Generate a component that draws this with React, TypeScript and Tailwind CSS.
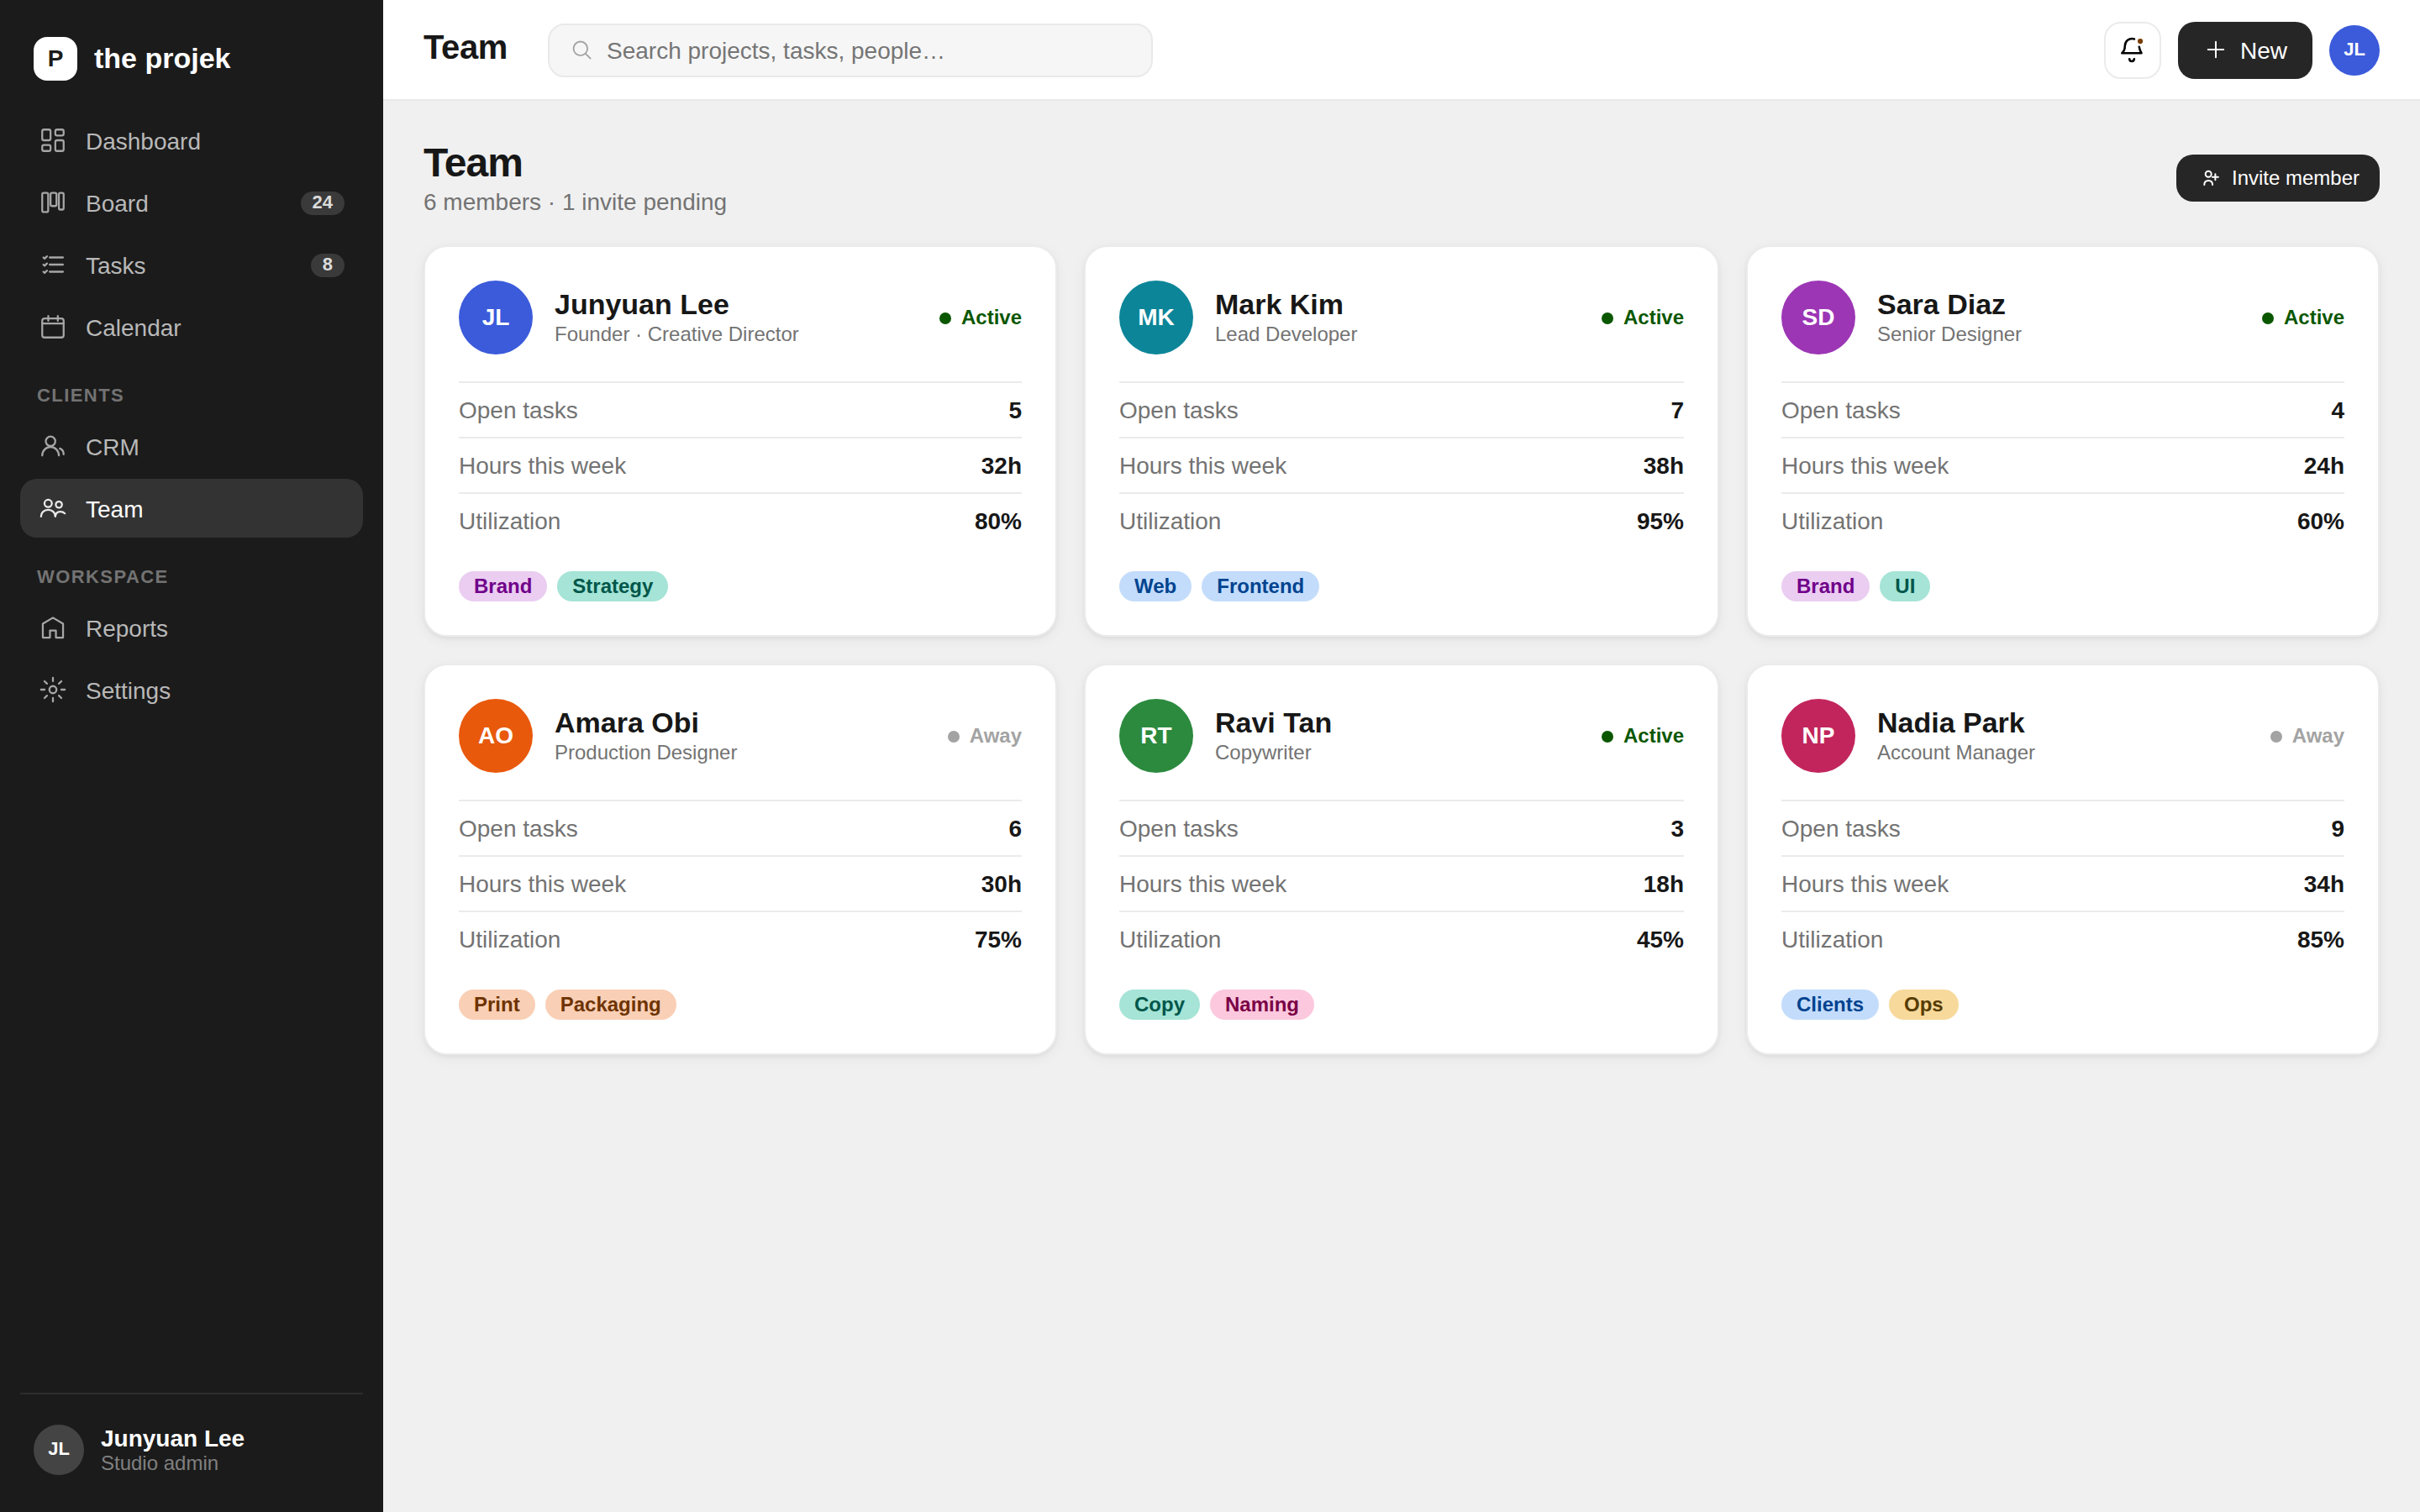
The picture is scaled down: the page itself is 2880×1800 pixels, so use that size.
import type { ReactNode } from "react";

type IconProps = { children: ReactNode; className?: string; strokeWidth?: number };

const Icon = ({ children, className = "", strokeWidth = 1.6 }: IconProps) => (
  <svg
    viewBox="0 0 24 24"
    fill="none"
    stroke="currentColor"
    strokeWidth={strokeWidth}
    strokeLinecap="round"
    strokeLinejoin="round"
    className={`shrink-0 ${className}`}
  >
    {children}
  </svg>
);

const icons = {
  dashboard: (
    <>
      <rect x="3" y="3" width="7" height="9" rx="1.5" />
      <rect x="14" y="3" width="7" height="5" rx="1.5" />
      <rect x="14" y="12" width="7" height="9" rx="1.5" />
      <rect x="3" y="16" width="7" height="5" rx="1.5" />
    </>
  ),
  board: (
    <>
      <rect x="3" y="4" width="5" height="16" rx="1.2" />
      <rect x="10" y="4" width="5" height="11" rx="1.2" />
      <rect x="17" y="4" width="4" height="14" rx="1.2" />
    </>
  ),
  tasks: (
    <path d="M9.3 6h11.1M9.3 12h11.1M9.3 18h11.1M4 6l1 1 2-2M4 12l1 1 2-2M4 18l1 1 2-2" />
  ),
  calendar: (
    <>
      <rect x="3" y="5" width="18" height="16" rx="2" />
      <path d="M3 9.2h18M8.1 3v4M16.1 3v4" />
    </>
  ),
  crm: (
    <>
      <circle cx="10" cy="8" r="4" />
      <path d="M3 20c0-4 3-7.2 7-7.2s7 3.2 7 7.2M17.8 14c2 .8 3.2 2.5 3.2 5" />
    </>
  ),
  team: (
    <>
      <circle cx="8" cy="8" r="3.1" />
      <circle cx="17" cy="9" r="2.6" />
      <path d="M2 19c0-3.3 2.6-5.6 6-5.6s6 2.3 6 5.6c.2-2.5 1.8-4.1 4.2-4.1 1.5 0 2.8.5 3.8 1.5" />
    </>
  ),
  reports: <path d="M3.5 8.8 12 3.8l8.5 5v11.7h-6v-6h-5v6h-6z" />,
  settings: (
    <>
      <circle cx="12" cy="12" r="3" />
      <path d="M12 2v3M12 19v3M2 12h3M19 12h3M4.9 4.9 7 7M17 17l2.1 2.1M4.9 19.1 7 17M17 7l2.1-2.1" />
    </>
  ),
};

type NavItemProps = {
  icon: keyof typeof icons;
  label: string;
  badge?: string;
  active?: boolean;
};

const NavItem = ({ icon, label, badge, active }: NavItemProps) => (
  <a
    href="#"
    className={`flex h-[70px] items-center gap-[22px] rounded-[20px] px-[22px] text-[28px] leading-8 ${
      active ? "bg-[#333333] text-white" : "text-[#b8b8b8]"
    }`}
  >
    <Icon className={`size-[34px] ${active ? "text-[#ebebeb]" : "text-[#a6a6a6]"}`}>
      {icons[icon]}
    </Icon>
    <span className="flex-1 pt-1">{label}</span>
    {badge && (
      <span className="mt-0.5 h-7 rounded-full bg-[#3a3a3a] px-3.5 text-[22px] leading-[25px] font-bold text-[#dcdcdc]">
        {badge}
      </span>
    )}
  </a>
);

const NavLabel = ({ children }: { children: ReactNode }) => (
  <p className="mt-1 flex h-[60px] items-center px-5 pt-[18px] text-[22px] leading-[26px] font-bold tracking-[0.065em] text-[#737373]">
    {children}
  </p>
);

const Sidebar = () => (
  <aside className="flex w-[456px] shrink-0 flex-col bg-[#1b1b1b] px-6 pt-11 pb-6">
    <div className="flex h-[52px] items-center gap-5 px-4">
      <span className="flex size-[52px] items-center justify-center rounded-2xl bg-white text-[28px] font-bold text-[#1b1b1b]">
        P
      </span>
      <span className="pb-[3px] text-[34px] leading-10 font-bold text-white">the projek</span>
    </div>

    <nav className="mt-9 flex flex-col gap-1">
      <NavItem icon="dashboard" label="Dashboard" />
      <NavItem icon="board" label="Board" badge="24" />
      <NavItem icon="tasks" label="Tasks" badge="8" />
      <NavItem icon="calendar" label="Calendar" />
      <NavLabel>CLIENTS</NavLabel>
      <NavItem icon="crm" label="CRM" />
      <NavItem icon="team" label="Team" active />
      <NavLabel>WORKSPACE</NavLabel>
      <NavItem icon="reports" label="Reports" />
      <NavItem icon="settings" label="Settings" />
    </nav>

    <div className="mt-auto flex h-[118px] items-start gap-5 border-t-2 border-[#2d2d2d] px-4 pt-9">
      <span className="flex size-[60px] items-center justify-center rounded-full bg-[#444444] pb-[3px] text-[22px] font-bold text-white">
        JL
      </span>
      <div className="pt-px">
        <p className="text-[28px] leading-8 font-bold text-white">Junyuan Lee</p>
        <p className="-mt-px text-2xl leading-[27px] text-[#808080]">Studio admin</p>
      </div>
    </div>
  </aside>
);

const Topbar = () => (
  <header className="flex h-[120px] items-center border-b-2 border-[#e9e9e9] bg-white px-12 pt-0.5">
    <h2 className="w-[148px] pb-[9px] text-[40px] leading-[44px] font-bold tracking-[-0.01em] text-[#171717]">
      Team
    </h2>
    <div className="flex h-16 w-[720px] items-center gap-4 rounded-[20px] border-2 border-[#e9e9e9] bg-[#f6f6f6] px-6">
      <Icon className="mb-0.5 size-7 text-[#a3a3a3]">
        <circle cx="11" cy="11" r="7.1" />
        <path d="m16.2 16.2 4.9 4.9" />
      </Icon>
      <span className="pt-0.5 text-[28px] leading-8 text-[#757575]">
        Search projects, tasks, people…
      </span>
    </div>
    <div className="ml-auto flex items-center gap-5">
      <button className="flex size-[68px] items-center justify-center rounded-[20px] border-2 border-[#ebebeb] bg-white text-black">
        <Icon className="mb-0.5 size-[34px]" strokeWidth={1.8}>
          <path d="M13.4 3.1C9 2 5.6 5 5.5 9c0 2.7-.6 4.3-2.4 6h16.3c-.9-1.6-1.6-3.2-1.9-5.2M9.3 19.9c.4 2.6 3.6 2.6 4 0" />
          <circle cx="18.4" cy="5" r="2.2" fill="#7a3d00" stroke="none" />
        </Icon>
      </button>
      <button className="flex h-[68px] w-40 items-center gap-4 rounded-[20px] bg-[#262626] pl-8 text-[28px] leading-8 text-white">
        <Icon className="mb-0.5 size-[26px]" strokeWidth={1.8}>
          <path d="M12 3.5v17M3.5 12h17" />
        </Icon>
        <span className="pt-0.5">New</span>
      </button>
      <span className="flex size-[60px] items-center justify-center rounded-full bg-[#3b5bdb] pb-[3px] text-[22px] font-bold text-white">
        JL
      </span>
    </div>
  </header>
);

const tones = {
  purple: "bg-[#eacdf1] text-[#70008a]",
  teal: "bg-[#a5e4d6] text-[#00564a]",
  blue: "bg-[#c3dcfb] text-[#00438f]",
  orange: "bg-[#f9cfb5] text-[#6e3300]",
  pink: "bg-[#fbc8dd] text-[#7a0045]",
  yellow: "bg-[#f7d99b] text-[#573c00]",
};

type Member = {
  initials: string;
  name: string;
  role: string;
  color: string;
  away?: boolean;
  tasks: string;
  hours: string;
  utilization: string;
  tags: [string, keyof typeof tones][];
};

const members: Member[] = [
  {
    initials: "JL",
    name: "Junyuan Lee",
    role: "Founder · Creative Director",
    color: "bg-[#3b5bdb]",
    tasks: "5",
    hours: "32h",
    utilization: "80%",
    tags: [["Brand", "purple"], ["Strategy", "teal"]],
  },
  {
    initials: "MK",
    name: "Mark Kim",
    role: "Lead Developer",
    color: "bg-[#0c8599]",
    tasks: "7",
    hours: "38h",
    utilization: "95%",
    tags: [["Web", "blue"], ["Frontend", "blue"]],
  },
  {
    initials: "SD",
    name: "Sara Diaz",
    role: "Senior Designer",
    color: "bg-[#9c36b5]",
    tasks: "4",
    hours: "24h",
    utilization: "60%",
    tags: [["Brand", "purple"], ["UI", "teal"]],
  },
  {
    initials: "AO",
    name: "Amara Obi",
    role: "Production Designer",
    color: "bg-[#e8590c]",
    away: true,
    tasks: "6",
    hours: "30h",
    utilization: "75%",
    tags: [["Print", "orange"], ["Packaging", "orange"]],
  },
  {
    initials: "RT",
    name: "Ravi Tan",
    role: "Copywriter",
    color: "bg-[#2b8a3e]",
    tasks: "3",
    hours: "18h",
    utilization: "45%",
    tags: [["Copy", "teal"], ["Naming", "pink"]],
  },
  {
    initials: "NP",
    name: "Nadia Park",
    role: "Account Manager",
    color: "bg-[#c2255c]",
    away: true,
    tasks: "9",
    hours: "34h",
    utilization: "85%",
    tags: [["Clients", "blue"], ["Ops", "yellow"]],
  },
];

const Stat = ({ label, value }: { label: string; value: string }) => (
  <div className="flex h-[66px] items-center justify-between border-t-2 border-[#ebebeb] pt-0.5 text-[28px] leading-8">
    <span className="text-[#737373]">{label}</span>
    <span className="font-bold text-[#171717]">{value}</span>
  </div>
);

const MemberCard = ({ member }: { member: Member }) => (
  <article className="rounded-[28px] border-2 border-[#ebebeb] bg-white p-10 shadow-[0_2px_4px_rgba(0,0,0,0.05),0_4px_16px_rgba(0,0,0,0.05)]">
    <div className="flex items-center gap-[26px] pb-8">
      <span
        className={`flex size-[88px] items-center justify-center rounded-full text-[28px] leading-8 font-bold text-white ${member.color}`}
      >
        {member.initials}
      </span>
      <div className="flex-1 pb-0.5">
        <h3 className="mb-0.5 text-[34px] leading-[39px] font-bold text-[#171717]">
          {member.name}
        </h3>
        <p className="text-2xl leading-[27px] text-[#737373]">{member.role}</p>
      </div>
      <span
        className={`flex items-center gap-3 text-2xl leading-7 font-bold ${
          member.away ? "text-[#a3a3a3]" : "text-[#0b5700]"
        }`}
      >
        <span className="mt-0.5 size-3.5 rounded-full bg-current" />
        {member.away ? "Away" : "Active"}
      </span>
    </div>
    <Stat label="Open tasks" value={member.tasks} />
    <Stat label="Hours this week" value={member.hours} />
    <Stat label="Utilization" value={member.utilization} />
    <div className="mt-7 flex gap-3">
      {member.tags.map(([name, tone]) => (
        <span
          key={name}
          className={`h-9 rounded-full px-[18px] text-2xl leading-9 font-bold ${tones[tone]}`}
        >
          {name}
        </span>
      ))}
    </div>
  </article>
);

const App = () => {
  return (
    <div className="flex h-[1800px] w-[2880px] overflow-hidden bg-[#f0f0f0] font-['Liberation_Sans',Arial,sans-serif]">
      <Sidebar />
      <div className="flex flex-1 flex-col">
        <Topbar />
        <main className="flex-1 px-12 pt-12">
          <div className="flex h-[92px] items-start justify-between">
            <div>
              <h1 className="text-5xl leading-[52px] font-bold tracking-[-0.02em] text-[#171717]">
                Team
              </h1>
              <p className="mt-px text-[28px] leading-10 text-[#737373]">
                6 members · 1 invite pending
              </p>
            </div>
            <button className="mt-4 flex h-14 w-[242px] items-center gap-3 rounded-[20px] bg-[#262626] pl-[30px] text-2xl leading-7 text-white">
              <Icon className="size-6" strokeWidth={2}>
                <circle cx="8.2" cy="7.2" r="3.5" />
                <path d="M3.3 20c0-3 2-5 4.9-5s4.9 2 4.9 5M16.4 7.2v7M12.9 10.7h7" />
              </Icon>
              Invite member
            </button>
          </div>

          <div className="mt-8 grid grid-cols-[754px_756px_754px] gap-8">
            {members.map((member) => (
              <MemberCard key={member.initials} member={member} />
            ))}
          </div>
        </main>
      </div>
    </div>
  );
};

export default App;
